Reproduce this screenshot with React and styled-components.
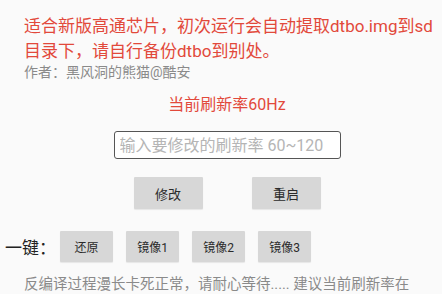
import React from 'react'
import styled, { createGlobalStyle } from 'styled-components'

const Global = createGlobalStyle`
  html, body {
    margin: 0;
    padding: 0;
    background: #fafafa;
    overflow: hidden;
  }
  body {
    font-family: Roboto, "Noto Sans CJK SC", sans-serif;
  }
`

const Page = styled.div`
  width: 442px;
  height: 294px;
  overflow: hidden;
  padding-top: 14px;
  box-sizing: border-box;
`

const Notice = styled.p`
  margin: 0 0 0 24px;
  color: #e2493b;
  font-size: 17px;
  line-height: 25px;
  white-space: nowrap;
`

const Author = styled.p`
  margin: -1px 0 0 24px;
  color: #8a8a8a;
  font-size: 14px;
  line-height: 18px;
`

const Center = styled.div`
  display: flex;
  flex-direction: column;
  align-items: center;
  padding-left: 12px;
`

const Rate = styled.div`
  margin-top: 14px;
  color: #e2493b;
  font-size: 16px;
  line-height: 20px;
`

const Input = styled.input`
  margin-top: 16px;
  width: 227px;
  height: 28px;
  box-sizing: border-box;
  border: 1.5px solid #555;
  border-radius: 3px;
  background: #fff;
  padding: 0 5px;
  font-family: Roboto, "Noto Sans CJK SC", sans-serif;
  font-size: 16px;
  outline: none;
  &::placeholder {
    color: #b5b5b5;
  }
`

const ButtonRow = styled.div`
  display: flex;
  gap: ${p => p.$gap}px;
  margin-top: 18px;
`

const Button = styled.button`
  width: ${p => p.$w}px;
  height: ${p => p.$h}px;
  border: none;
  border-radius: 1px;
  background: #d7d7d7;
  color: #2a2a2a;
  font-family: Roboto, "Noto Sans CJK SC", sans-serif;
  font-size: ${p => p.$fs}px;
  padding: 0;
  box-shadow: 0 1px 1px rgba(0, 0, 0, 0.08);
`

const OneKey = styled.div`
  display: flex;
  align-items: center;
  margin-top: 22px;
  padding-left: 5px;
`

const Label = styled.span`
  width: 55px;
  font-size: 17px;
  color: #222;
`

const KeyButtons = styled.div`
  display: flex;
  gap: 13px;
`

const Hint = styled.p`
  margin: 13px 0 0 24px;
  color: #8a8a8a;
  font-size: 14.5px;
  line-height: 20px;
  white-space: nowrap;
`

export default function App() {
  return (
    <Page>
      <Global />
      <Notice>
        适合新版高通芯片，初次运行会自动提取dtbo.img到sd
        <br />
        目录下，请自行备份dtbo到别处。
      </Notice>
      <Author>作者：黑风洞的熊猫@酷安</Author>
      <Center>
        <Rate>当前刷新率60Hz</Rate>
        <Input placeholder="输入要修改的刷新率 60~120" />
        <ButtonRow $gap={49}>
          <Button $w={69} $h={32} $fs={13}>修改</Button>
          <Button $w={69} $h={32} $fs={13}>重启</Button>
        </ButtonRow>
      </Center>
      <OneKey>
        <Label>一键：</Label>
        <KeyButtons>
          <Button $w={53} $h={31} $fs={12}>还原</Button>
          <Button $w={53} $h={31} $fs={12}>镜像1</Button>
          <Button $w={53} $h={31} $fs={12}>镜像2</Button>
          <Button $w={53} $h={31} $fs={12}>镜像3</Button>
        </KeyButtons>
      </OneKey>
      <Hint>反编译过程漫长卡死正常，请耐心等待..... 建议当前刷新率在</Hint>
    </Page>
  )
}
